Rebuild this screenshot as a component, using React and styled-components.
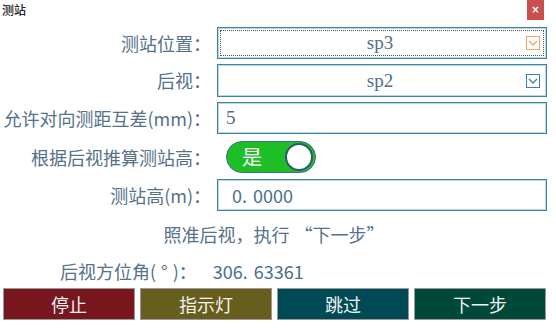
import React from "react";
import styled, { createGlobalStyle } from "styled-components";

const Global = createGlobalStyle`
  html, body { margin: 0; padding: 0; background: #fff; }
  body { width: 556px; height: 329px; overflow: hidden; }
`;

const Window = styled.div`
  width: 556px;
  height: 329px;
  display: flex;
  flex-direction: column;
  font-family: "Noto Sans CJK SC", "Noto Sans", sans-serif;
  background: #fff;
`;

const TitleBar = styled.div`
  height: 22px;
  display: flex;
  align-items: flex-start;
  justify-content: space-between;
`;

const Title = styled.div`
  font-size: 12px;
  line-height: 20px;
  color: #222;
  padding-left: 2px;
  font-weight: 500;
`;

const CloseBtn = styled.div`
  width: 17px;
  height: 20px;
  margin-right: 12px;
  background: #c9504f;
  color: #fff;
  font-size: 10px;
  line-height: 20px;
  text-align: center;
  font-family: "DejaVu Sans", sans-serif;
  font-weight: bold;
`;

const Form = styled.div`
  display: grid;
  grid-template-columns: 211px 330px;
  column-gap: 6px;
  margin-top: 5px;
`;

const Label = styled.div`
  text-align: right;
  font-size: 18px;
  color: #56718a;
  height: 32px;
  line-height: 32px;
  margin-top: ${(p) => p.$mt || 0}px;
  white-space: nowrap;
`;

const Field = styled.div`
  height: ${(p) => p.$h || 32}px;
  margin-top: ${(p) => p.$mt || 0}px;
  box-sizing: border-box;
  border: 1px solid #3e82a1;
  box-shadow: inset 0 0 0 1px #b9d8e6;
  position: relative;
  display: flex;
  align-items: center;
  color: #4b6f8c;
`;

const FocusRing = styled.div`
  position: absolute;
  inset: 2px;
  border: 1px dotted #555;
  pointer-events: none;
`;

const SelectValue = styled.div`
  flex: 1;
  text-align: center;
  font-family: "Liberation Serif", "DejaVu Serif", serif;
  font-size: 19px;
  padding-right: 4px;
`;

const Arrow = styled.div`
  position: absolute;
  right: 6px;
  top: 50%;
  transform: translateY(-50%);
  width: 14px;
  height: 14px;
  box-sizing: border-box;
  border: 1px solid ${(p) => p.$c};
  display: flex;
  align-items: center;
  justify-content: center;
`;

const InputText = styled.div`
  padding-left: ${(p) => p.$pl || 8}px;
  font-family: ${(p) => (p.$serif ? '"Liberation Serif", "DejaVu Serif", serif' : '"Noto Sans CJK SC", sans-serif')};
  font-size: ${(p) => (p.$serif ? 19 : 18)}px;
  color: #4b6f8c;
`;

const Dot = styled.span`
  margin-right: 6px;
`;

const SwitchCell = styled.div`
  margin-top: 7px;
  display: flex;
  align-items: center;
  padding-left: 9px;
`;

const Switch = styled.div`
  width: 90px;
  height: 32px;
  box-sizing: border-box;
  border-radius: 16px;
  background: #1ebf26;
  border: 1px solid #3d6f85;
  display: flex;
  align-items: center;
  justify-content: space-between;
  padding: 0 2px 0 15px;
`;

const SwitchText = styled.span`
  color: #fff;
  font-size: 20px;
  line-height: 1;
`;

const Knob = styled.div`
  width: 28px;
  height: 28px;
  box-sizing: border-box;
  border-radius: 50%;
  background: #fff;
  border: 2px solid #2f5a6e;
`;

const Message = styled.div`
  text-align: center;
  font-size: 18px;
  color: #56718a;
  margin-top: 11px;
  padding-right: 8px;
  line-height: 24px;
`;

const Quote = styled.span`
  margin-left: 5px;
`;

const AngleRow = styled.div`
  display: flex;
  align-items: center;
  margin-top: 13px;
  padding-left: 60px;
  font-size: 18px;
  color: #56718a;
  line-height: 24px;
  gap: 16px;
`;

const Paren = styled.span`
  margin: 0 5px;
`;

const AngleValue = styled.span`
  color: #4b6f8c;
`;

const ButtonBar = styled.div`
  display: grid;
  grid-template-columns: repeat(4, 132px);
  column-gap: 5px;
  padding-left: 3px;
  margin-top: 5px;
`;

const Btn = styled.div`
  height: 32px;
  box-sizing: border-box;
  border: 1px solid #9a9a9a;
  background: ${(p) => p.$bg};
  color: #f2f2f2;
  font-size: 18px;
  display: flex;
  align-items: center;
  justify-content: center;
`;

const Chevron = ({ c }) => (
  <Arrow $c={c}>
    <svg width="10" height="6" viewBox="0 0 10 6">
      <path d="M1 1 L5 5 L9 1" fill="none" stroke={c} strokeWidth="1.3" />
    </svg>
  </Arrow>
);

export default function App() {
  return (
    <Window>
      <Global />
      <TitleBar>
        <Title>测站</Title>
        <CloseBtn>×</CloseBtn>
      </TitleBar>
      <Form>
        <Label>测站位置：</Label>
        <Field>
          <FocusRing />
          <SelectValue>sp3</SelectValue>
          <Chevron c="#f5a55e" />
        </Field>

        <Label $mt={5}>后视：</Label>
        <Field $mt={5} $h={33}>
          <SelectValue>sp2</SelectValue>
          <Chevron c="#3e82a1" />
        </Field>

        <Label $mt={5}>允许对向测距互差(mm)：</Label>
        <Field $mt={5}>
          <InputText $serif>5</InputText>
        </Field>

        <Label $mt={7}>根据后视推算测站高：</Label>
        <SwitchCell>
          <Switch>
            <SwitchText>是</SwitchText>
            <Knob />
          </Switch>
        </SwitchCell>

        <Label $mt={6}>测站高(m)：</Label>
        <Field $mt={6}>
          <InputText $pl={14}>
            0<Dot>.</Dot>0000
          </InputText>
        </Field>
      </Form>
      <Message>
        照准后视，执行<Quote>“下一步”</Quote>
      </Message>
      <AngleRow>
        <span>
          后视方位角(<Paren>°</Paren>)：
        </span>
        <AngleValue>
          306<Dot>.</Dot>63361
        </AngleValue>
      </AngleRow>
      <ButtonBar>
        <Btn $bg="#77161d">停止</Btn>
        <Btn $bg="#675e1d">指示灯</Btn>
        <Btn $bg="#004a56">跳过</Btn>
        <Btn $bg="#00493a">下一步</Btn>
      </ButtonBar>
    </Window>
  );
}
